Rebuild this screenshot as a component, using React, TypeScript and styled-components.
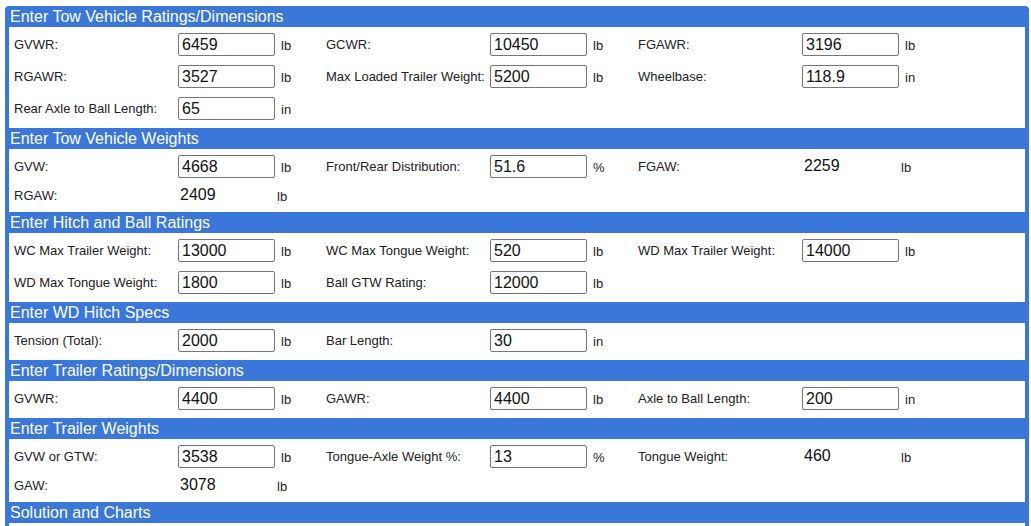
import React from "react";
import styled, { createGlobalStyle } from "styled-components";

const GlobalStyle = createGlobalStyle`
  html, body {
    margin: 0;
    padding: 0;
    background: #ffffff;
  }
  body {
    font-family: "Liberation Sans", Arial, sans-serif;
    color: #222222;
  }
`;

type Field = {
  label: string;
  value: string;
  unit: string;
  readOnly?: boolean;
};

type Section = {
  title: string;
  rows: Field[][];
};

const sections: Section[] = [
  {
    title: "Enter Tow Vehicle Ratings/Dimensions",
    rows: [
      [
        { label: "GVWR:", value: "6459", unit: "lb" },
        { label: "GCWR:", value: "10450", unit: "lb" },
        { label: "FGAWR:", value: "3196", unit: "lb" },
      ],
      [
        { label: "RGAWR:", value: "3527", unit: "lb" },
        { label: "Max Loaded Trailer Weight:", value: "5200", unit: "lb" },
        { label: "Wheelbase:", value: "118.9", unit: "in" },
      ],
      [{ label: "Rear Axle to Ball Length:", value: "65", unit: "in" }],
    ],
  },
  {
    title: "Enter Tow Vehicle Weights",
    rows: [
      [
        { label: "GVW:", value: "4668", unit: "lb" },
        { label: "Front/Rear Distribution:", value: "51.6", unit: "%" },
        { label: "FGAW:", value: "2259", unit: "lb", readOnly: true },
      ],
      [{ label: "RGAW:", value: "2409", unit: "lb", readOnly: true }],
    ],
  },
  {
    title: "Enter Hitch and Ball Ratings",
    rows: [
      [
        { label: "WC Max Trailer Weight:", value: "13000", unit: "lb" },
        { label: "WC Max Tongue Weight:", value: "520", unit: "lb" },
        { label: "WD Max Trailer Weight:", value: "14000", unit: "lb" },
      ],
      [
        { label: "WD Max Tongue Weight:", value: "1800", unit: "lb" },
        { label: "Ball GTW Rating:", value: "12000", unit: "lb" },
      ],
    ],
  },
  {
    title: "Enter WD Hitch Specs",
    rows: [
      [
        { label: "Tension (Total):", value: "2000", unit: "lb" },
        { label: "Bar Length:", value: "30", unit: "in" },
      ],
    ],
  },
  {
    title: "Enter Trailer Ratings/Dimensions",
    rows: [
      [
        { label: "GVWR:", value: "4400", unit: "lb" },
        { label: "GAWR:", value: "4400", unit: "lb" },
        { label: "Axle to Ball Length:", value: "200", unit: "in" },
      ],
    ],
  },
  {
    title: "Enter Trailer Weights",
    rows: [
      [
        { label: "GVW or GTW:", value: "3538", unit: "lb" },
        { label: "Tongue-Axle Weight %:", value: "13", unit: "%" },
        { label: "Tongue Weight:", value: "460", unit: "lb", readOnly: true },
      ],
      [{ label: "GAW:", value: "3078", unit: "lb", readOnly: true }],
    ],
  },
  {
    title: "Solution and Charts",
    rows: [],
  },
];

const Page = styled.div`
  padding: 6px 2px 0 5px;
`;

const Panel = styled.div`
  border: 4px solid #3a77d9;
  border-top: 0;
  border-radius: 4px 4px 0 0;
  background: #ffffff;
  min-height: 540px;
`;

const Header = styled.div`
  background: #3a77d9;
  color: #ffffff;
  font-family: "Liberation Sans", Arial, sans-serif;
  font-size: 16px;
  height: 21px;
  line-height: 21px;
  padding-left: 1px;
  white-space: nowrap;
`;

const Body = styled.div`
  display: flex;
  flex-direction: column;
  padding: 1px 0 4px;
`;

const Row = styled.div<{ $compact: boolean }>`
  display: grid;
  grid-template-columns: repeat(3, 312px);
  align-items: center;
  height: ${(p) => (p.$compact ? "26px" : "32px")};
  padding-left: 5px;
`;

const FieldCell = styled.div<{ $readOnly: boolean }>`
  display: grid;
  grid-template-columns: ${(p) =>
    p.$readOnly ? "166px 97px auto" : "164px 103px auto"};
  align-items: center;
`;

const Label = styled.span`
  font-size: 13px;
  color: #222222;
  white-space: nowrap;
`;

const Unit = styled.span`
  font-size: 13px;
  color: #222222;
  padding-top: 2px;
`;

const ValueInput = styled.input`
  box-sizing: border-box;
  width: 97px;
  height: 23px;
  border: 1px solid #767676;
  border-radius: 2px;
  padding: 1px 3px 0;
  font-family: "Liberation Sans", Arial, sans-serif;
  font-size: 16px;
  color: #111111;
  background: #ffffff;
  outline: none;
`;

const StaticValue = styled.span`
  font-size: 16px;
  color: #111111;
`;

const FieldView: React.FC<{ field: Field }> = ({ field }) => (
  <FieldCell $readOnly={!!field.readOnly}>
    <Label>{field.label}</Label>
    {field.readOnly ? (
      <StaticValue>{field.value}</StaticValue>
    ) : (
      <ValueInput type="text" defaultValue={field.value} />
    )}
    <Unit>{field.unit}</Unit>
  </FieldCell>
);

export default function App() {
  return (
    <>
      <GlobalStyle />
      <Page>
        <Panel>
          {sections.map((section) => (
            <section key={section.title}>
              <Header>{section.title}</Header>
              <Body>
                {section.rows.map((row, i) => (
                  <Row key={i} $compact={row.every((f) => f.readOnly)}>
                    {row.map((f) => (
                      <FieldView key={f.label} field={f} />
                    ))}
                  </Row>
                ))}
              </Body>
            </section>
          ))}
        </Panel>
      </Page>
    </>
  );
}
